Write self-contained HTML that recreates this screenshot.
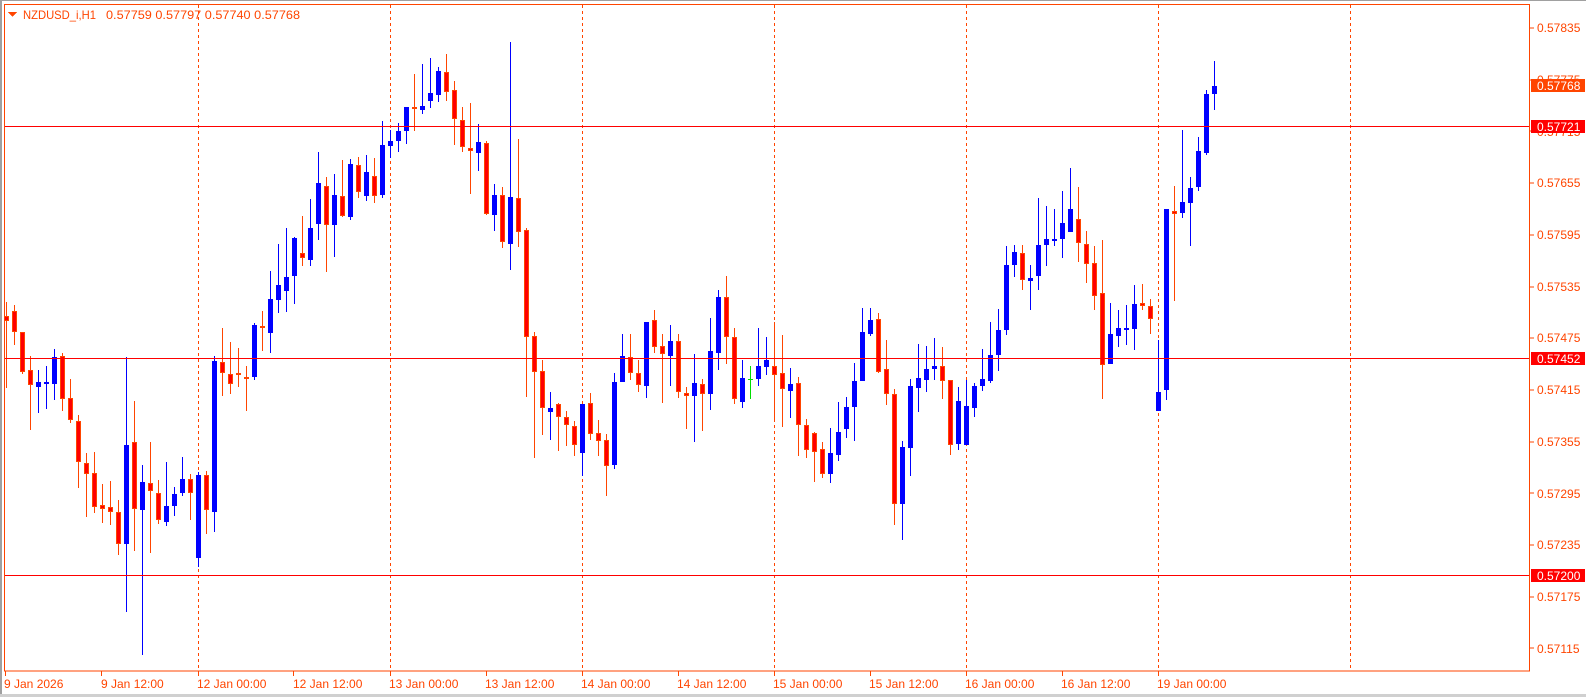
<!DOCTYPE html>
<html><head><meta charset="utf-8"><style>
html,body{margin:0;padding:0;background:#fff;overflow:hidden}
body{width:1586px;height:697px;position:relative}
svg{position:absolute;left:0;top:0}
text{font-family:"Liberation Sans",Arial,sans-serif;font-size:12px}
</style></head><body>
<svg id="s" width="1586" height="697" viewBox="0 0 1586 697" xmlns="http://www.w3.org/2000/svg" shape-rendering="crispEdges">
<rect x="0" y="0" width="1586" height="697" fill="#fff"/>
<rect x="0" y="0" width="2" height="697" fill="#a0a0a0"/>
<rect x="0" y="0" width="1586" height="1" fill="#a0a0a0"/>
<rect x="0" y="694" width="1586" height="3" fill="#d0d0d0"/>
<g stroke="#ff4500" stroke-width="1" stroke-dasharray="3,3">
<line x1="198.5" y1="5" x2="198.5" y2="671"/>
<line x1="390.5" y1="5" x2="390.5" y2="671"/>
<line x1="582.5" y1="5" x2="582.5" y2="671"/>
<line x1="774.5" y1="5" x2="774.5" y2="671"/>
<line x1="966.5" y1="5" x2="966.5" y2="671"/>
<line x1="1158.5" y1="5" x2="1158.5" y2="671"/>
<line x1="1350.5" y1="5" x2="1350.5" y2="671"/>
</g>
<g id="c"></g>
<g stroke="#ff0000" stroke-width="1.3">
<line x1="4" y1="126.5" x2="1530" y2="126.5"/>
<line x1="4" y1="358.5" x2="1530" y2="358.5"/>
<line x1="4" y1="575.5" x2="1530" y2="575.5"/>
</g>
<rect x="4.5" y="4.5" width="1525" height="666.5" fill="none" stroke="#ff4500" stroke-width="1"/>
<g fill="#ff4500">
<text x="1537" y="32">0.57835</text>
<text x="1537" y="84">0.57775</text>
<text x="1537" y="136">0.57715</text>
<text x="1537" y="187">0.57655</text>
<text x="1537" y="239">0.57595</text>
<text x="1537" y="291">0.57535</text>
<text x="1537" y="342">0.57475</text>
<text x="1537" y="394">0.57415</text>
<text x="1537" y="446">0.57355</text>
<text x="1537" y="498">0.57295</text>
<text x="1537" y="549">0.57235</text>
<text x="1537" y="601">0.57175</text>
<text x="1537" y="653">0.57115</text>
</g>
<g stroke="#ff4500">
<line x1="1530" y1="28" x2="1534" y2="28"/><line x1="1530" y1="80" x2="1534" y2="80"/>
<line x1="1530" y1="131" x2="1534" y2="131"/><line x1="1530" y1="183" x2="1534" y2="183"/>
<line x1="1530" y1="235" x2="1534" y2="235"/><line x1="1530" y1="287" x2="1534" y2="287"/>
<line x1="1530" y1="338" x2="1534" y2="338"/><line x1="1530" y1="390" x2="1534" y2="390"/>
<line x1="1530" y1="442" x2="1534" y2="442"/><line x1="1530" y1="493" x2="1534" y2="493"/>
<line x1="1530" y1="545" x2="1534" y2="545"/><line x1="1530" y1="597" x2="1534" y2="597"/>
<line x1="1530" y1="648" x2="1534" y2="648"/>
</g>
<rect x="1531" y="79" width="54" height="13" fill="#ff4500"/>
<text x="1537" y="90" fill="#fff">0.57768</text>
<rect x="1531" y="120" width="54" height="13" fill="#ff0000"/>
<text x="1537" y="131" fill="#fff">0.57721</text>
<rect x="1531" y="352" width="54" height="13" fill="#ff0000"/>
<text x="1537" y="363" fill="#fff">0.57452</text>
<rect x="1531" y="569" width="54" height="13" fill="#ff0000"/>
<text x="1537" y="580" fill="#fff">0.57200</text>
<g stroke="#ff4500">
<line x1="5.5" y1="671" x2="5.5" y2="676"/><line x1="101.5" y1="671" x2="101.5" y2="676"/>
<line x1="198.5" y1="671" x2="198.5" y2="676"/><line x1="293.5" y1="671" x2="293.5" y2="676"/>
<line x1="390.5" y1="671" x2="390.5" y2="676"/><line x1="486.5" y1="671" x2="486.5" y2="676"/>
<line x1="582.5" y1="671" x2="582.5" y2="676"/><line x1="678.5" y1="671" x2="678.5" y2="676"/>
<line x1="774.5" y1="671" x2="774.5" y2="676"/><line x1="870.5" y1="671" x2="870.5" y2="676"/>
<line x1="966.5" y1="671" x2="966.5" y2="676"/><line x1="1062.5" y1="671" x2="1062.5" y2="676"/>
<line x1="1158.5" y1="671" x2="1158.5" y2="676"/>
</g>
<g fill="#ff4500">
<text x="4" y="688">9 Jan 2026</text>
<text x="101" y="688">9 Jan 12:00</text>
<text x="197" y="688">12 Jan 00:00</text>
<text x="293" y="688">12 Jan 12:00</text>
<text x="389" y="688">13 Jan 00:00</text>
<text x="485" y="688">13 Jan 12:00</text>
<text x="581" y="688">14 Jan 00:00</text>
<text x="677" y="688">14 Jan 12:00</text>
<text x="773" y="688">15 Jan 00:00</text>
<text x="869" y="688">15 Jan 12:00</text>
<text x="965" y="688">16 Jan 00:00</text>
<text x="1061" y="688">16 Jan 12:00</text>
<text x="1157" y="688">19 Jan 00:00</text>
</g>
<polygon points="8,12 17,12 12.5,17" fill="#ff4500"/>
<text x="23" y="19" fill="#ff4500" textLength="73" lengthAdjust="spacingAndGlyphs">NZDUSD_i,H1</text>
<text x="106" y="19" fill="#ff4500" textLength="194" lengthAdjust="spacingAndGlyphs">0.57759 0.57797 0.57740 0.57768</text>
</svg>
<script>
var d=[[316,321,302,388,'d'],[311,332,305,345,'d'],[332,372,332,374,'d'],[370,385,356,430,'d'],[382,387,370,413,'u'],[382,384,366,409,'u'],[357,384,349,400,'u'],[356,399,353,411,'d'],[398,420,379,423,'d'],[421,462,415,488,'d'],
[463,474,453,517,'d'],[473,507,452,513,'d'],[505,509,484,523,'d'],[507,512,481,525,'d'],[512,544,500,555,'d'],[445,544,357,612,'u'],[442,509,401,551,'d'],[482,510,465,655,'u'],[483,491,442,553,'d'],[493,520,480,524,'d'],
[506,522,462,526,'u'],[494,506,487,516,'u'],[479,493,457,496,'u'],[479,493,474,520,'d'],[475,558,472,567,'u'],[475,510,471,534,'d'],[361,512,356,532,'u'],[362,373,328,396,'d'],[374,384,342,394,'d'],[373,375,348,387,'d'],
[377,378,366,411,'d'],[325,377,323,380,'u'],[326,328,311,351,'d'],[299,333,271,353,'u'],[285,300,244,313,'u'],[277,291,228,312,'u'],[238,276,237,304,'u'],[253,258,216,266,'d'],[228,260,199,266,'u'],[183,224,152,240,'u'],
[186,225,177,272,'d'],[195,225,174,257,'u'],[196,216,160,217,'d'],[164,217,159,220,'u'],[165,192,157,198,'d'],[172,196,155,201,'u'],[176,196,158,203,'d'],[145,195,121,198,'u'],[141,146,130,158,'u'],[131,141,123,152,'u'],
[107,131,107,144,'u'],[107,109,74,131,'d'],[106,110,64,114,'u'],[93,101,58,108,'u'],[71,95,67,102,'u'],[72,92,54,101,'d'],[90,119,81,145,'d'],[120,147,107,152,'d'],[148,151,103,194,'d'],[142,153,124,171,'u'],
[143,214,141,215,'d'],[195,215,184,231,'u'],[195,242,187,248,'d'],[197,244,42,270,'u'],[198,232,139,247,'d'],[230,337,228,397,'d'],[336,372,332,458,'d'],[371,408,360,435,'d'],[408,412,392,440,'u'],[404,417,403,451,'d'],
[417,425,411,446,'d'],[426,445,421,456,'d'],[404,453,404,476,'u'],[403,434,393,440,'d'],[433,441,420,456,'d'],[440,466,434,496,'d'],[382,465,373,469,'u'],[356,382,334,382,'u'],[357,373,334,380,'d'],[373,385,360,392,'d'],
[322,386,322,398,'u'],[320,347,310,353,'d'],[346,354,334,403,'d'],[341,356,325,386,'u'],[341,392,334,398,'d'],[393,396,387,429,'d'],[383,396,354,442,'u'],[384,394,379,431,'d'],[351,394,318,410,'u'],[297,353,290,370,'u'],
[297,337,276,364,'d'],[337,399,328,404,'d'],[378,402,360,408,'u'],[379,381,366,399,'g'],[366,379,328,386,'u'],[360,367,337,375,'u'],[366,375,322,421,'d'],[373,389,335,427,'d'],[384,391,368,418,'u'],[383,425,377,456,'d'],
[425,450,419,458,'d'],[433,452,432,482,'d'],[449,474,442,478,'d'],[453,474,428,483,'u'],[432,455,402,461,'u'],[407,429,397,438,'u'],[381,407,363,441,'u'],[332,381,308,381,'u'],[320,334,308,336,'u'],[319,372,313,373,'d'],
[369,394,340,405,'d'],[394,504,389,525,'d'],[447,504,441,540,'u'],[386,448,379,476,'u'],[378,388,344,412,'u'],[369,380,346,392,'u'],[366,369,338,380,'u'],[366,381,347,399,'d'],[380,445,380,455,'d'],[401,444,387,450,'u'],
[406,445,380,445,'u'],[386,408,383,417,'u'],[379,386,349,391,'u'],[355,381,322,383,'u'],[330,355,309,371,'u'],[265,330,246,335,'u'],[252,265,245,277,'u'],[253,280,245,290,'d'],[278,281,265,310,'u'],[245,276,198,290,'u'],
[239,245,206,266,'u'],[239,241,209,246,'u'],[223,239,191,258,'u'],[209,232,168,232,'u'],[219,243,187,262,'d'],[244,264,231,283,'d'],[263,296,246,310,'d'],[293,365,240,399,'d'],[334,364,303,364,'u'],[328,336,310,347,'u'],
[328,330,305,345,'u'],[304,329,285,350,'u'],[303,306,284,310,'d'],[306,319,299,334,'d'],[392,411,340,411,'u'],[209,390,209,400,'u'],[211,214,186,301,'d'],[202,213,130,218,'u'],[188,203,177,246,'u'],[151,187,137,191,'u'],
[94,153,90,155,'u'],[86,94,61,110,'u']];
var g=document.getElementById('c'),h='';
for(var i=0;i<d.length;i++){var c=d[i],x=6+8*i,t=c[0],b=c[1];if(b-t<2)b=t+2;
if(c[4]=='u'){h+='<rect x="'+x+'" y="'+c[2]+'" width="1" height="'+(c[3]-c[2])+'" fill="#0000ff"/><rect x="'+(x-2)+'" y="'+t+'" width="5" height="'+(b-t)+'" fill="#0000ff"/>';}
else if(c[4]=='g'){h+='<rect x="'+x+'" y="'+c[2]+'" width="1" height="'+(c[3]-c[2])+'" fill="#00dd00"/><rect x="'+(x-2)+'" y="'+t+'" width="5" height="1" fill="#00dd00"/>';}
else{h+='<rect x="'+x+'" y="'+c[2]+'" width="1" height="'+(c[3]-c[2])+'" fill="#ff4500"/><rect x="'+(x-2)+'" y="'+t+'" width="5" height="'+(b-t)+'" fill="#ff4500"/>';if(b-t>2)h+='<rect x="'+(x-1)+'" y="'+(t+1)+'" width="3" height="'+(b-t-2)+'" fill="#ff0000"/>';}}
g.innerHTML=h;
</script>
</body></html>
